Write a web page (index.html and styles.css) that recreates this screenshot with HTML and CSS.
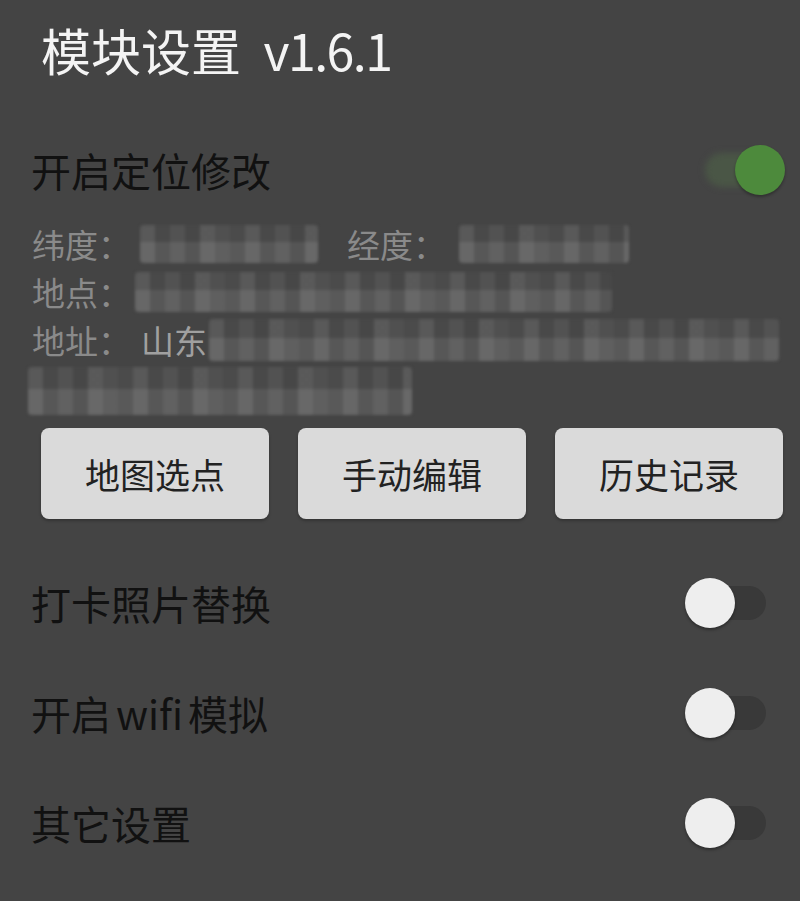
FILE: index.html
```html
<!DOCTYPE html>
<html lang="zh-CN">
<head>
<meta charset="utf-8">
<title>模块设置</title>
<link rel="stylesheet" href="styles.css">
</head>
<body>
<div class="page">
  <header class="title">模块设置&nbsp; <span class="version">v1.6.1</span></header>

  <div class="row row-main">
    <span class="row-label">开启定位修改</span>
    <span class="switch on"><span class="track"></span><span class="thumb"></span></span>
  </div>

  <div class="info">
    <div class="info-line">
      <span class="lbl">纬度：</span><span class="mosaic m-lat"></span>
      <span class="lbl lbl-lon">经度：</span><span class="mosaic m-lon"></span>
    </div>
    <div class="info-line">
      <span class="lbl">地点：</span><span class="mosaic m-place"></span>
    </div>
    <div class="info-line">
      <span class="lbl">地址：</span><span class="val">山东</span><span class="mosaic m-addr1"></span>
    </div>
    <div class="info-line">
      <span class="mosaic m-addr2"></span>
    </div>
  </div>

  <div class="buttons">
    <button class="btn">地图选点</button>
    <button class="btn">手动编辑</button>
    <button class="btn">历史记录</button>
  </div>

  <div class="row">
    <span class="row-label">打卡照片替换</span>
    <span class="switch"><span class="track"></span><span class="thumb"></span></span>
  </div>
  <div class="row">
    <span class="row-label row-wifi">开启 wifi 模拟</span>
    <span class="switch"><span class="track"></span><span class="thumb"></span></span>
  </div>
  <div class="row">
    <span class="row-label">其它设置</span>
    <span class="switch"><span class="track"></span><span class="thumb"></span></span>
  </div>
</div>
</body>
</html>
```

FILE: styles.css
```css
* { box-sizing: border-box; }

html, body {
  margin: 0;
  padding: 0;
  background: #444444;
}

body {
  font-family: "Noto Sans CJK SC", "Noto Sans", Roboto, sans-serif;
  width: 800px;
  height: 901px;
  overflow: hidden;
}

.page {
  display: flex;
  flex-direction: column;
}

.title {
  height: 106px;
  line-height: 98px;
  padding-left: 41px;
  font-size: 50px;
  color: #f4f4f4;
  font-family: "Noto Sans CJK SC", Roboto, sans-serif;
}

.version {
  letter-spacing: -1.5px;
}

.row {
  height: 110px;
  display: flex;
  align-items: center;
  justify-content: space-between;
  padding-left: 31px;
}

.row-main {
  height: 114px;
  padding-top: 14px;
}

.row-label {
  font-size: 40px;
  color: #111111;
  line-height: 1;
}

.row-wifi {
  word-spacing: -4px;
}

.switch {
  position: relative;
  width: 115px;
  height: 60px;
  flex: none;
}

.track {
  position: absolute;
  left: 16px;
  top: 13px;
  width: 65px;
  height: 34px;
  border-radius: 17px;
  background: #393939;
}

.thumb {
  position: absolute;
  left: 0;
  top: 5px;
  width: 50px;
  height: 50px;
  border-radius: 50%;
  background: #eeeeee;
  box-shadow: 0 2px 3px rgba(0, 0, 0, 0.35);
}

.switch.on .track {
  left: 20px;
  width: 60px;
  background: #4a5646;
  filter: blur(3px);
}

.switch.on .thumb {
  left: 50px;
  background: #4d8a3c;
  box-shadow: 0 2px 3px rgba(0, 0, 0, 0.3);
}

.info {
  display: flex;
  flex-direction: column;
  padding-left: 32px;
}

.info-line {
  height: 48px;
  display: flex;
  align-items: center;
}

.lbl {
  font-size: 33px;
  color: #8a8a8a;
  width: 103px;
  flex: none;
  line-height: 1;
}

.lbl-lon {
  margin-left: 29px;
}

.val {
  font-size: 33px;
  color: #a0a0a0;
  line-height: 1;
  margin-left: 6px;
  width: 70px;
  flex: none;
}

.mosaic {
  display: block;
  flex: none;
  height: 38px;
  border-radius: 4px;
  background-color: #535353;
  background-image:
    linear-gradient(180deg, rgba(0,0,0,0.07) 0 45%, rgba(255,255,255,0.05) 45% 100%),
    linear-gradient(90deg,
      rgba(255,255,255,0.07) 0 15px,
      rgba(0,0,0,0.06) 15px 30px,
      rgba(255,255,255,0.03) 30px 45px,
      rgba(0,0,0,0.09) 45px 60px,
      rgba(255,255,255,0.08) 60px 75px,
      rgba(255,255,255,0.02) 75px 90px,
      rgba(0,0,0,0.04) 90px 105px);
  background-size: 100% 100%, 105px 100%;
  filter: blur(1.5px);
}

.m-lat { width: 178px; margin-left: 5px; }
.m-lon { width: 170px; margin-left: 9px; }
.m-place { width: 477px; height: 40px; }
.m-addr1 { width: 570px; height: 42px; margin-left: -2px; }
.m-addr2 { width: 384px; height: 48px; margin-left: -4px; margin-top: 6px; }

.buttons {
  display: flex;
  gap: 29px;
  padding: 0 17px 0 41px;
  margin-top: 16px;
  margin-bottom: 29px;
}

.btn {
  flex: 1;
  height: 91px;
  border: none;
  border-radius: 8px;
  background: #dadada;
  color: #222222;
  font-family: "Noto Sans CJK SC", sans-serif;
  font-size: 35px;
  padding: 0;
  box-shadow: 0 2px 3px rgba(0, 0, 0, 0.25);
}
```
